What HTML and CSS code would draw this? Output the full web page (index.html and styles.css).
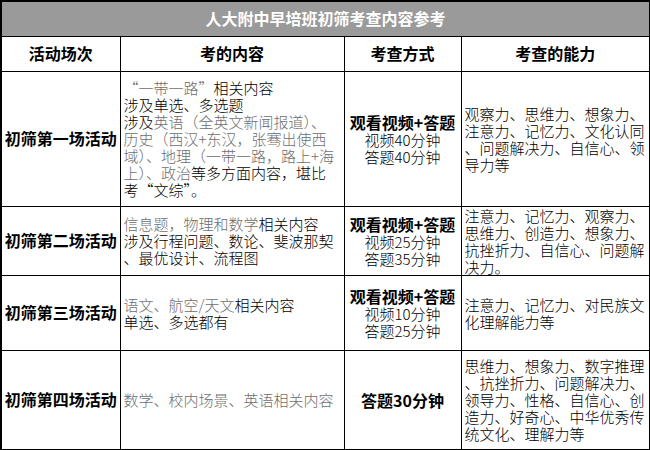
FILE: index.html
```html
<!DOCTYPE html>
<html lang="zh">
<head>
<meta charset="utf-8">
<title>人大附中早培班初筛考查内容参考</title>
<link rel="stylesheet" href="styles.css">
</head>
<body>
<table class="sheet">
  <colgroup>
    <col class="c-stage">
    <col class="c-content">
    <col class="c-mode">
    <col class="c-ability">
  </colgroup>
  <tr class="r-title">
    <th colspan="4" class="title">人大附中早培班初筛考查内容参考</th>
  </tr>
  <tr class="r-head">
    <th>活动场次</th>
    <th>考的内容</th>
    <th>考查方式</th>
    <th>考查的能力</th>
  </tr>
  <tr class="r-1">
    <td class="stage">初筛第一场活动</td>
    <td class="content"><span class="muted">“一带一路”</span>相关内容<br>涉及单选、多选题<br>涉及<span class="muted">英语（全英文新闻报道）、<br>历史（西汉+东汉，张骞出使西<br>域）、地理（一带一路，路上+海<br>上）、政治</span>等多方面内容，堪比<br>考“文综”。</td>
    <td class="mode"><b>观看视频+答题</b><br>视频40分钟<br>答题40分钟</td>
    <td class="ability">观察力、思维力、想象力、<br>注意力、记忆力、文化认同<br>、问题解决力、自信心、领<br>导力等</td>
  </tr>
  <tr class="r-2">
    <td class="stage">初筛第二场活动</td>
    <td class="content"><span class="muted">信息题，物理和数学</span>相关内容<br>涉及行程问题、数论、斐波那契<br>、最优设计、流程图</td>
    <td class="mode"><b>观看视频+答题</b><br>视频25分钟<br>答题35分钟</td>
    <td class="ability">注意力、记忆力、观察力、<br>思维力、创造力、想象力、<br>抗挫折力、自信心、问题解<br>决力。</td>
  </tr>
  <tr class="r-3">
    <td class="stage">初筛第三场活动</td>
    <td class="content"><span class="muted">语文、航空/天文</span>相关内容<br>单选、多选都有</td>
    <td class="mode"><b>观看视频+答题</b><br>视频10分钟<br>答题25分钟</td>
    <td class="ability">注意力、记忆力、对民族文<br>化理解能力等</td>
  </tr>
  <tr class="r-4">
    <td class="stage">初筛第四场活动</td>
    <td class="content"><span class="muted">数学、校内场景、英语相关内容</span></td>
    <td class="mode"><b>答题30分钟</b></td>
    <td class="ability">思维力、想象力、数字推理<br>、抗挫折力、问题解决力、<br>领导力、性格、自信心、创<br>造力、好奇心、中华优秀传<br>统文化、理解力等</td>
  </tr>
</table>
</body>
</html>
```

FILE: styles.css
```css
html, body {
  margin: 0;
  padding: 0;
  background: #fff;
}
body {
  font-family: "Noto Sans CJK SC", "Noto Sans", sans-serif;
  color: #000;
}
.sheet {
  border-collapse: collapse;
  table-layout: fixed;
  width: 649px;
  border: 2px solid #000;
}
.c-stage { width: 119px; }
.c-content { width: 224px; }
.c-mode { width: 117px; }
.c-ability { width: 189px; }

.sheet th,
.sheet td {
  border: 1px solid #000;
  padding: 0 3px;
  vertical-align: middle;
  font-size: 15px;
  line-height: 17px;
  font-weight: 300;
  white-space: nowrap;
  overflow: hidden;
}
.sheet th {
  font-size: 16px;
  font-weight: bold;
  text-align: center;
}
.r-title { height: 35px; }
.title {
  background: #9a9a9a;
  color: #fff;
}
.r-head { height: 35px; }
.r-1 { height: 135px; }
.r-2 { height: 69px; }
.r-3 { height: 75px; }
.r-4 { height: 100px; }

.sheet td.stage {
  font-size: 16px;
  font-weight: bold;
  text-align: center;
  padding: 0 1px;
}
.content {
  text-align: left;
}
.muted {
  color: #6e6e6e;
}
.mode {
  text-align: center;
}
.mode b {
  font-size: 16px;
  line-height: 18px;
  font-weight: bold;
}
.ability {
  text-align: left;
}
```
